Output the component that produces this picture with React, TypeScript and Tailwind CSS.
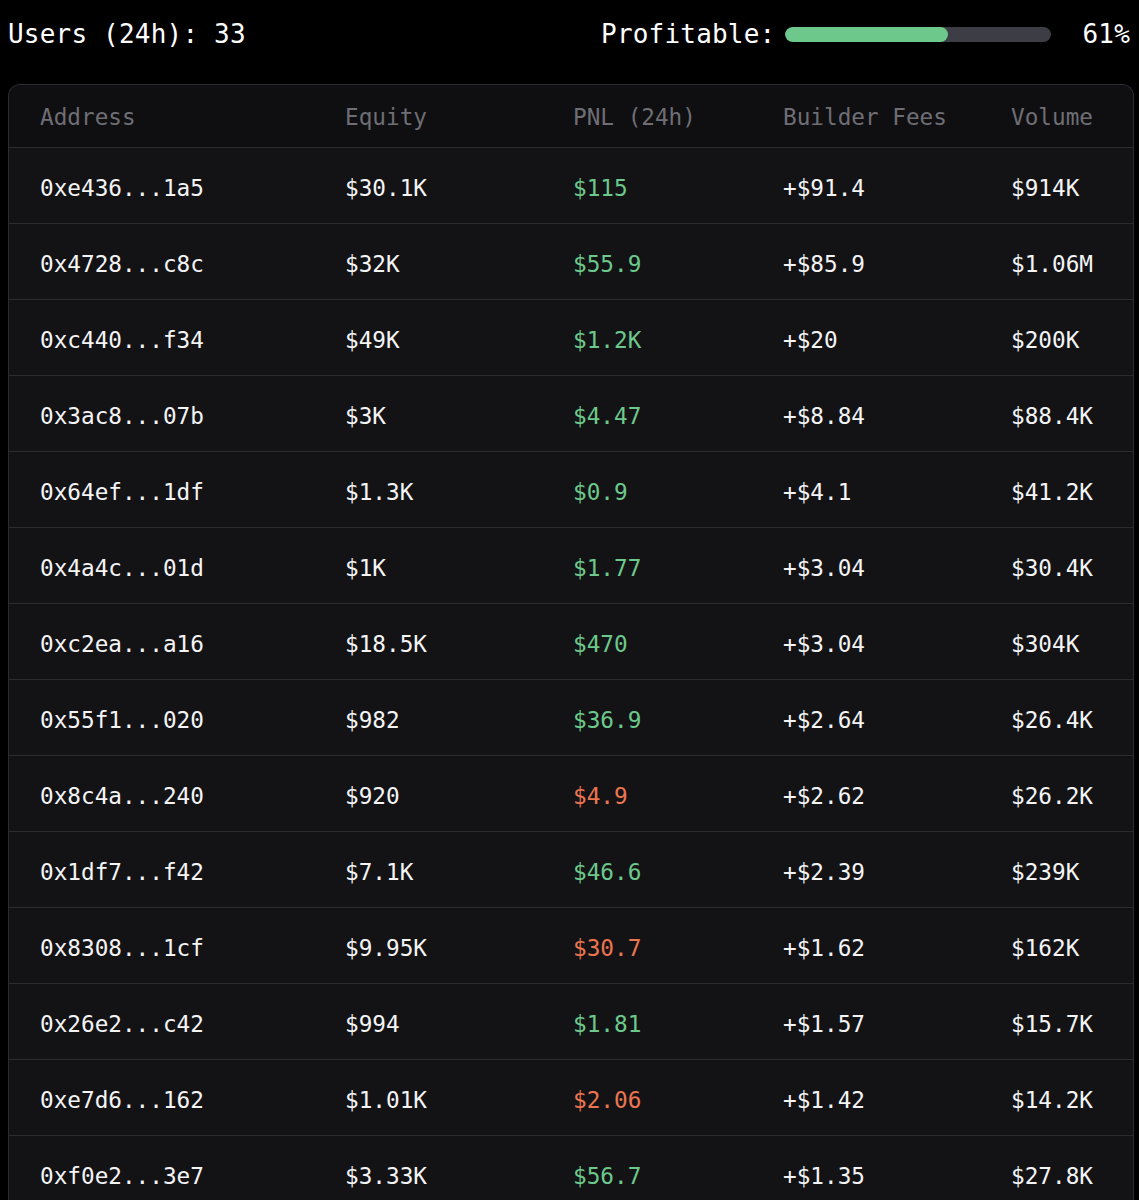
const rows = [
  { addr: '0xe436...1a5', equity: '$30.1K', pnl: '$115', up: true, fees: '+$91.4', volume: '$914K' },
  { addr: '0x4728...c8c', equity: '$32K', pnl: '$55.9', up: true, fees: '+$85.9', volume: '$1.06M' },
  { addr: '0xc440...f34', equity: '$49K', pnl: '$1.2K', up: true, fees: '+$20', volume: '$200K' },
  { addr: '0x3ac8...07b', equity: '$3K', pnl: '$4.47', up: true, fees: '+$8.84', volume: '$88.4K' },
  { addr: '0x64ef...1df', equity: '$1.3K', pnl: '$0.9', up: true, fees: '+$4.1', volume: '$41.2K' },
  { addr: '0x4a4c...01d', equity: '$1K', pnl: '$1.77', up: true, fees: '+$3.04', volume: '$30.4K' },
  { addr: '0xc2ea...a16', equity: '$18.5K', pnl: '$470', up: true, fees: '+$3.04', volume: '$304K' },
  { addr: '0x55f1...020', equity: '$982', pnl: '$36.9', up: true, fees: '+$2.64', volume: '$26.4K' },
  { addr: '0x8c4a...240', equity: '$920', pnl: '$4.9', up: false, fees: '+$2.62', volume: '$26.2K' },
  { addr: '0x1df7...f42', equity: '$7.1K', pnl: '$46.6', up: true, fees: '+$2.39', volume: '$239K' },
  { addr: '0x8308...1cf', equity: '$9.95K', pnl: '$30.7', up: false, fees: '+$1.62', volume: '$162K' },
  { addr: '0x26e2...c42', equity: '$994', pnl: '$1.81', up: true, fees: '+$1.57', volume: '$15.7K' },
  { addr: '0xe7d6...162', equity: '$1.01K', pnl: '$2.06', up: false, fees: '+$1.42', volume: '$14.2K' },
  { addr: '0xf0e2...3e7', equity: '$3.33K', pnl: '$56.7', up: true, fees: '+$1.35', volume: '$27.8K' },
]

const cols = 'grid grid-cols-[305px_228px_210px_228px_1fr] pl-[31px] items-center'

export default function App() {
  return (
    <div className="min-h-screen bg-black text-white font-['DejaVu_Sans_Mono','Liberation_Mono',monospace] overflow-hidden h-[1200px]">
      {/* Summary bar */}
      <div className="flex items-center justify-between h-[68px] pl-2 pr-[9px] text-[26px] leading-none tracking-[0.2px]">
        <span>Users (24h): 33</span>
        <div className="flex items-center">
          <span>Profitable:</span>
          <div className="ml-[10px] w-[266px] h-[15px] rounded-full bg-[#3d3d45] overflow-hidden">
            <div className="h-full w-[61%] rounded-full bg-[#6cc98b]" />
          </div>
          <span className="ml-[31px]">61%</span>
        </div>
      </div>

      {/* Table */}
      <div className="mt-[16px] ml-2 mr-[5px] rounded-t-[12px] border border-b-0 border-[#2b2b30] bg-[#131316] text-[22.7px]">
        <div className={`${cols} h-[63px] pt-[2px] text-[#6e6e74] border-b border-[#2b2b30] bg-[#0f0f12] rounded-t-[12px]`}>
          <span>Address</span>
          <span>Equity</span>
          <span>PNL (24h)</span>
          <span>Builder Fees</span>
          <span>Volume</span>
        </div>
        {rows.map((r) => (
          <div key={r.addr} className={`${cols} h-[76px] pt-[5px] border-b border-[#2b2b30] text-[#f4f4f5]`}>
            <span>{r.addr}</span>
            <span>{r.equity}</span>
            <span className={r.up ? 'text-[#6cc98b]' : 'text-[#ec7550]'}>{r.pnl}</span>
            <span>{r.fees}</span>
            <span>{r.volume}</span>
          </div>
        ))}
      </div>
    </div>
  )
}
